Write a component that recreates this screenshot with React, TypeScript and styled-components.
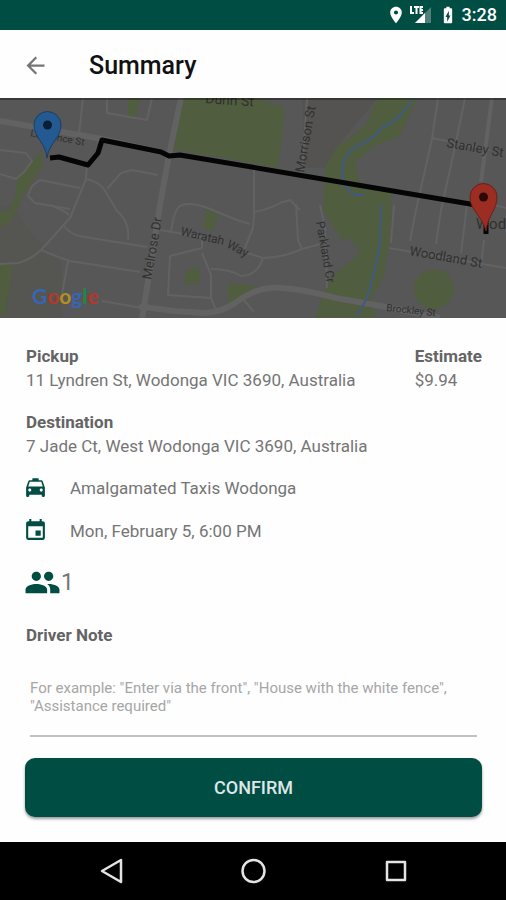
import React from "react";
import styled, { createGlobalStyle } from "styled-components";
import {
  MdArrowBack,
  MdBatteryChargingFull,
  MdEvent,
  MdLocalTaxi,
  MdLocationOn,
  MdPeople,
} from "react-icons/md";

const GREEN = "#004d44";

const GlobalStyle = createGlobalStyle`
  * { box-sizing: border-box; }
  body {
    margin: 0;
    background: #fefefe;
    font-family: Roboto, "Liberation Sans", sans-serif;
  }
`;

const Screen = styled.div`
  display: flex;
  flex-direction: column;
  min-height: 100vh;
`;

const StatusBar = styled.div`
  display: flex;
  align-items: center;
  justify-content: flex-end;
  height: 30px;
  padding: 0 9px;
  background: ${GREEN};
  color: #fff;
`;

const SignalIcon = styled.svg`
  width: 24px;
  height: 20px;
  margin: 0 5px 0 3px;
`;

const Clock = styled.time`
  margin-left: 4px;
  font-size: 18px;
  font-weight: 500;
  line-height: 20px;
`;

const AppBar = styled.header`
  display: flex;
  align-items: center;
  gap: 40px;
  height: 68px;
  padding: 2px 22px 0;
`;

const BackButton = styled.button`
  display: flex;
  padding: 0;
  border: 0;
  background: none;
  color: #757575;
  cursor: pointer;
`;

const Title = styled.h1`
  margin: 0;
  padding-top: 2px;
  color: #111;
  font-size: 25px;
  font-weight: 500;
  line-height: 32px;
`;

const MapView = styled.svg`
  display: block;
  width: 100%;
  height: 220px;
  background: #575757;
`;

const Road = styled.path<{ $width?: number }>`
  fill: none;
  stroke: #626262;
  stroke-width: ${({ $width = 2 }) => $width}px;
  stroke-linejoin: round;
`;

const Park = styled.path`
  fill: #505d3f;
`;

const Stream = styled.path`
  fill: none;
  stroke: #405a82;
  stroke-width: 2px;
`;

const Street = styled.text<{ $size?: number }>`
  fill: #303030;
  font-size: ${({ $size = 13 }) => $size}px;
`;

const Logo = styled.text`
  font-family: Lato, sans-serif;
  font-size: 21px;
  font-weight: 700;
`;

const Content = styled.main`
  display: flex;
  flex: 1;
  flex-direction: column;
  padding: 26px 24px 24px 25px;
  color: #757575;
`;

const Places = styled.div`
  display: flex;
  justify-content: space-between;
  gap: 16px;
  margin-bottom: 18px;
`;

const Field = styled.section`
  padding-left: 1px;
`;

const Label = styled.h2`
  margin: 0;
  color: #646464;
  font-size: 17px;
  font-weight: 700;
  line-height: 24px;
`;

const Value = styled.p`
  margin: 0;
  font-size: 17px;
  font-weight: 400;
  line-height: 24px;
`;

const Details = styled.div`
  display: flex;
  flex-direction: column;
  margin-top: 8px;
`;

const Detail = styled.div`
  display: flex;
  align-items: center;
  gap: 22px;
  height: 43px;

  svg {
    margin-left: -2px;
    color: ${GREEN};
  }
`;

const Passengers = styled.div`
  display: flex;
  align-items: center;
  height: 60px;
  margin-bottom: 11px;
  font-size: 23px;

  svg {
    margin-left: -1px;
    color: ${GREEN};
  }
`;

const NoteLabel = styled.label`
  padding-left: 1px;
  color: #646464;
  font-size: 17px;
  font-weight: 700;
  line-height: 24px;
`;

const Note = styled.textarea`
  height: 58px;
  margin: 32px 5px 21px;
  padding: 0;
  border: 0;
  border-bottom: 2px solid #c2c2c2;
  outline: 0;
  background: none;
  color: #555;
  font-family: inherit;
  font-size: 15px;
  line-height: 18px;
  resize: none;

  &::placeholder {
    color: #a6a6a6;
    opacity: 1;
  }
`;

const ConfirmButton = styled.button`
  height: 59px;
  border: 0;
  border-radius: 10px;
  background: ${GREEN};
  box-shadow: 0 2px 3px rgba(0, 0, 0, 0.4);
  color: #dfe7e6;
  font-family: inherit;
  font-size: 18px;
  font-weight: 500;
  cursor: pointer;
`;

const NavBar = styled.nav`
  display: flex;
  align-items: center;
  justify-content: center;
  gap: 112px;
  height: 58px;
  background: #000;
`;

const NavButton = styled.button`
  display: flex;
  padding: 0;
  border: 0;
  background: none;
  cursor: pointer;

  svg {
    width: 30px;
    height: 30px;
    fill: none;
    stroke: #e4e4e4;
    stroke-width: 2.5px;
    stroke-linejoin: round;
  }
`;

const ROADS = [
  "M83 0 L79 36",
  "M107 0 V15 L147 22 L152 0",
  "M0 52 L26 55 L32 63 L24 74 L16 81 L0 76",
  "M32 88 L40 82 L80 90 M32 88 L28 98 L35 105 L70 111",
  "M87 64 L86 81 L70 120 L41 152 Q30 162 18 165 L0 166",
  "M86 81 Q100 83 107 96 L117 113 Q130 124 128 142",
  "M107 91 L121 75 L132 72 L158 77",
  "M50 107 Q64 112 69 117",
  "M64 128 Q72 138 85 139 L147 149",
  "M41 152 Q60 160 70 163 L140 174",
  "M68 163 L62 196",
  "M102 203 L142 210",
  "M254 70 V118 L253 130 L244 152",
  "M171 134 Q174 112 180 108 Q190 103 210 111 L237 122 L250 126",
  "M254 114 Q270 111 280 105 L290 102 L300 112",
  "M296 106 L298 142 L302 151 L321 146",
  "M160 132 L202 139 V150 L170 158 L168 197 L211 200 L216 212",
  "M202 155 L211 177 L211 200",
  "M211 171 Q230 171 241 178 Q257 178 263 160 L244 154",
  "M263 160 Q285 159 302 151",
  "M307 0 L302 75",
  "M438 0 L432 41 L416 112 L410 143",
  "M465 0 L455 49 L441 112 L436 146",
  "M432 40 L490 52",
  "M389 150 L506 170",
  "M394 107 L391 145",
  "M467 107 L461 155",
  "M484 142 L481 168",
  "M481 104 L506 110",
  "M320 107 L325 130 L327 190",
  "M243 201 L254 214",
];

function LocationMap() {
  return (
    <MapView
      viewBox="0 0 506 220"
      preserveAspectRatio="xMidYMid slice"
      role="img"
      aria-label="Route from pickup to destination"
    >
      <path d="M0 108 L13 107 L35 140 L62 165 V220 H0Z" fill="#555652" />
      <path d="M302 0 H378 L336 50 L328 70 L305 70Z" fill="#555351" />
      <Park d="M182 0 H255 L285 10 L278 70 L174 51Z" />
      <Park d="M128 0 H139 L137 18 L128 20Z" />
      <Park d="M42 52 L43 68 L30 88 L22 98 L16 113 L9 113 L16 96 L16 82Z" />
      <Park d="M0 112 Q10 118 14 106 L19 107 Q12 126 0 130Z" />
      <Park d="M0 167 L13 167 L5 217 H0Z" />
      <Park d="M378 0 H418 L400 38 L373 49 L355 65 L360 86 L392 95 L389 148 L383 180 L371 200 L375 220 H315 L325 190 L339 172 L354 160 L359 148 L340 140 L323 112 L325 70 L336 50 L365 28Z" />
      <path d="M336 144 L349 140 L360 155 L337 174Z" fill="#575757" />
      <Park d="M205 111 L219 115 L212 134 L204 130Z" />
      <Park d="M187 171 L199 170 L200 185 L184 187Z" />
      <Park d="M228 185 L258 188 L237 202 L228 205Z" />
      <circle cx="434" cy="191" r="20" fill="#505d3f" />

      {ROADS.map((d) => (
        <Road key={d} d={d} />
      ))}
      <Road $width={6} d="M0 23 L40 30 L102 41 L160 54" />
      <Road $width={6} d="M181 0 L169 57 L160 107 L144 209 L142 220" />
      <Road $width={4} d="M492 0 L481 84" />
      <Road
        $width={6}
        d="M143 209 L175 213 L205 215 Q222 214 235 205 Q254 191 270 190 Q290 188 336 200 L386 209 L440 220"
      />
      <Road $width={5} d="M139 209 H149" />

      <Stream d="M413 0 Q402 19 390 26 Q380 29 377 36 Q370 43 353 50 Q342 61 342 76 Q344 92 356 97 L364 97" />
      <Stream d="M381 107 L380 145 Q376 170 367 200 L356 219" />

      <Street $size={10} transform="translate(30 38) rotate(10)">
        Lawrence St
      </Street>
      <Street $size={14} transform="translate(205 5) rotate(4)">
        Dunn St
      </Street>
      <Street transform="translate(304 75) rotate(-80)">Morrison St</Street>
      <Street transform="translate(151 182) rotate(-80)">Melrose Dr</Street>
      <Street $size={12} transform="translate(180 137) rotate(13)">
        Waratah
      </Street>
      <Street $size={12} transform="translate(226 149) rotate(27)">
        Way
      </Street>
      <Street $size={12} transform="translate(316 124) rotate(80)">
        Parkland Cr
      </Street>
      <Street transform="translate(446 49) rotate(10)">Stanley St</Street>
      <Street transform="translate(409 157) rotate(10)">Woodland St</Street>
      <Street $size={10} transform="translate(386 213) rotate(6)">
        Brockley St
      </Street>
      <Street $size={15} x="476" y="131">
        Wod
      </Street>

      <path
        d="M50 60 L59 59 L88 67 L98 55 L102 42 L161 54 L169 58 L180 57 L476 107 L486 111 V136"
        fill="none"
        stroke="#050505"
        strokeWidth="5"
        strokeLinejoin="round"
      />
      <path
        d="M47 60 C46 45 34 40 34 27 A13.500 13.500 0 0 1 61 27 C61 40 49 45 47 60Z"
        fill="#235a91"
        stroke="#1b3d62"
      />
      <circle cx="47.500" cy="27" r="4.500" fill="#0c1e31" />
      <path
        d="M486 133 C482 118 470 112 470 99 A13.500 13.500 0 0 1 497 99 C497 112 488 117 486 133Z"
        fill="#9b2d23"
        stroke="#6b1f18"
      />
      <circle cx="483.500" cy="99" r="4.500" fill="#2a0907" />

      <Logo x="32" y="206">
        <tspan fill="#3566b5">G</tspan>
        <tspan fill="#b5362c">o</tspan>
        <tspan fill="#b58f1c">o</tspan>
        <tspan fill="#3566b5">g</tspan>
        <tspan fill="#278543">l</tspan>
        <tspan fill="#b5362c">e</tspan>
      </Logo>
      <path d="M0 0 H506 V2 H0Z" fill="#000" opacity="0.350" />
    </MapView>
  );
}

export default function App() {
  return (
    <Screen>
      <GlobalStyle />
      <StatusBar>
        <MdLocationOn size={20} />
        <SignalIcon viewBox="0 0 24 20" aria-label="LTE signal">
          <path d="M22 2 V18 H6Z" fill="#527f79" />
          <path d="M16 8 V18 H6Z" fill="#fff" />
          <path
            d="M2 1 V8 H5 M5 2 H10 M7.500 2 V9 M14 2 H11.500 V8 H14 M11.500 5 H14"
            fill="none"
            stroke={GREEN}
            strokeWidth="4"
          />
          <path
            d="M2 1 V8 H5 M5 2 H10 M7.500 2 V9 M14 2 H11.500 V8 H14 M11.500 5 H14"
            fill="none"
            stroke="#fff"
            strokeWidth="2"
          />
        </SignalIcon>
        <MdBatteryChargingFull size={20} />
        <Clock>3:28</Clock>
      </StatusBar>

      <AppBar>
        <BackButton type="button" aria-label="Back">
          <MdArrowBack size={27} />
        </BackButton>
        <Title>Summary</Title>
      </AppBar>

      <LocationMap />

      <Content>
        <Places>
          <Field>
            <Label>Pickup</Label>
            <Value>11 Lyndren St, Wodonga VIC 3690, Australia</Value>
          </Field>
          <Field>
            <Label>Estimate</Label>
            <Value>$9.94</Value>
          </Field>
        </Places>
        <Field>
          <Label>Destination</Label>
          <Value>7 Jade Ct, West Wodonga VIC 3690, Australia</Value>
        </Field>
        <Details>
          <Detail>
            <MdLocalTaxi size={25} />
            <Value>Amalgamated Taxis Wodonga</Value>
          </Detail>
          <Detail>
            <MdEvent size={25} />
            <Value>Mon, February 5, 6:00 PM</Value>
          </Detail>
          <Passengers>
            <MdPeople size={37} />
            <span>1</span>
          </Passengers>
        </Details>
        <NoteLabel htmlFor="driver-note">Driver Note</NoteLabel>
        <Note
          id="driver-note"
          placeholder={
            'For example: "Enter via the front", "House with the white fence", "Assistance required"'
          }
        />
        <ConfirmButton type="button">CONFIRM</ConfirmButton>
      </Content>

      <NavBar>
        <NavButton type="button" aria-label="Back">
          <svg viewBox="0 0 30 30">
            <path d="M25 4 V26 L6 15Z" />
          </svg>
        </NavButton>
        <NavButton type="button" aria-label="Home">
          <svg viewBox="0 0 30 30">
            <circle cx="15.500" cy="15" r="11" />
          </svg>
        </NavButton>
        <NavButton type="button" aria-label="Recent apps">
          <svg viewBox="0 0 30 30">
            <rect x="7" y="6" width="18" height="18" />
          </svg>
        </NavButton>
      </NavBar>
    </Screen>
  );
}
